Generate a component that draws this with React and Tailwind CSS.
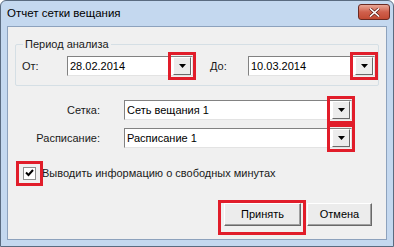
import React from 'react';

const font = { fontFamily: '"Liberation Sans", Arial, sans-serif' };

const Arrow = () => (
  <svg width="7" height="4" viewBox="0 0 7 4">
    <path d="M0 0h7L3.5 4z" fill="#000" />
  </svg>
);

const DropButton = () => (
  <div className="relative h-[18px] w-[18px] shrink-0">
    <div className="flex h-full w-full items-center justify-center border border-t-white border-l-white border-b-[#696969] border-r-[#696969] bg-[#ececec]">
      <Arrow />
    </div>
    {/* red highlight */}
    <div className="absolute -left-[5px] -right-[5px] -top-[5px] -bottom-[5px] border-[3px] border-[#e11d2a]" />
  </div>
);

const Combo = ({ value, width }) => (
  <div className={`flex h-[20px] items-center border border-t-[#828282] border-l-[#828282] border-b-[#e3e3e3] border-r-[#e3e3e3] bg-white pl-[2px] pr-[1px] ${width}`}>
    <span className="flex-1 leading-none text-black">{value}</span>
    <DropButton />
  </div>
);

const Button = ({ children, highlight }) => (
  <div className="relative">
    <div className="flex h-[23px] items-center justify-center border border-t-white border-l-white border-b-[#696969] border-r-[#696969] bg-[#ececec] text-black shadow-[inset_-1px_-1px_0_#a0a0a0]">
      {children}
    </div>
    {highlight && (
      <div className="absolute -left-[6px] -right-[5px] -top-[3px] -bottom-[9px] border-[3px] border-[#e11d2a]" />
    )}
  </div>
);

export default function App() {
  return (
    <div style={font} className="flex h-[247px] w-[394px] flex-col rounded-t-[6px] border border-[#5a6b80] bg-[#c4d8ef]">
      {/* Title bar */}
      <div className="flex h-[25px] shrink-0 items-center justify-between pl-[6px] pr-[3px]">
        <span className="text-[11.5px] text-black">Отчет сетки вещания</span>
        <div className="-mt-[3px] flex h-[16px] w-[32px] items-center justify-center rounded-[3px] border border-[#6b2a22] bg-gradient-to-b from-[#e8a797] via-[#d0604c] to-[#c24a33]">
          <svg width="11" height="9" viewBox="0 0 11 9">
            <path d="M1 0.5L10 8.5M10 0.5L1 8.5" stroke="#5a1a14" strokeWidth="3" />
            <path d="M1 0.5L10 8.5M10 0.5L1 8.5" stroke="#fff" strokeWidth="1.6" />
          </svg>
        </div>
      </div>

      {/* Client area */}
      <div className="mx-[6px] mb-[6px] flex-1 border border-[#8da2bd] bg-[#f0f0f0] text-[11px] text-[#1a1a1a]">
        {/* Group box */}
        <div className="relative ml-[7px] mt-[17px] h-[42px] w-[364px] rounded-[2px] border border-[#d5dfe5]">
          <span className="absolute -top-[8px] left-[7px] bg-[#f0f0f0] px-[2px] leading-[14px]">Период анализа</span>
          <div className="flex h-full items-center pt-[2px]">
            <span className="ml-[6px] w-[45px]">От:</span>
            <Combo value="28.02.2014" width="w-[126px]" />
            <span className="ml-[17px] w-[38px]">До:</span>
            <Combo value="10.03.2014" width="w-[127px]" />
          </div>
        </div>

        {/* Сетка */}
        <div className="mt-[14px] flex h-[20px] items-center">
          <span className="w-[92px] text-right">Сетка:</span>
          <div className="ml-[24px]">
            <Combo value="Сеть вещания 1" width="w-[228px]" />
          </div>
        </div>

        {/* Расписание */}
        <div className="mt-[8px] flex h-[20px] items-center">
          <span className="w-[92px] text-right">Расписание:</span>
          <div className="ml-[24px]">
            <Combo value="Расписание 1" width="w-[228px]" />
          </div>
        </div>

        {/* Checkbox */}
        <div className="mt-[17px] flex items-center">
          <div className="relative ml-[15px] h-[13px] w-[13px]">
            <div className="flex h-full w-full items-center justify-center border border-[#8e8f8f] bg-white">
              <svg width="9" height="8" viewBox="0 0 9 8">
                <path d="M1 3.5L3.5 6L8 1" stroke="#000" strokeWidth="2" fill="none" />
              </svg>
            </div>
            <div className="absolute -left-[7px] -right-[7px] -top-[6px] -bottom-[6px] border-[3px] border-[#e11d2a]" />
          </div>
          <span className="ml-[6px]">Выводить информацию о свободных минутах</span>
        </div>

        {/* Buttons */}
        <div className="mt-[21px] flex justify-end gap-[6px] pr-[14px]">
          <div className="w-[77px]">
            <Button highlight>Принять</Button>
          </div>
          <div className="w-[65px]">
            <Button>Отмена</Button>
          </div>
        </div>
      </div>
    </div>
  );
}
